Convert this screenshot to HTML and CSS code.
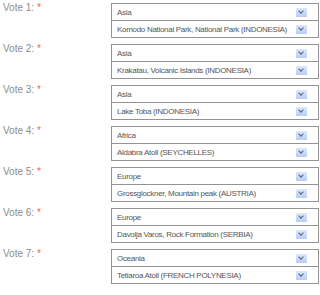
FILE: index.html
```html
<!DOCTYPE html>
<html lang="en">
<head>
    <meta charset="UTF-8">
    <title>Vote</title>
    <link rel="stylesheet" href="styles.css">
</head>
<body>
    <div class="votes">
        <div class="vote">
            <div class="label">Vote 1: <span class="req">*</span></div>
            <div class="picks">
                <div class="pick"><span>Asia</span><i class="arrow"></i></div>
                <div class="pick"><span>Komodo National Park, National Park (INDONESIA)</span><i class="arrow"></i></div>
            </div>
        </div>
        <div class="vote">
            <div class="label">Vote 2: <span class="req">*</span></div>
            <div class="picks">
                <div class="pick"><span>Asia</span><i class="arrow"></i></div>
                <div class="pick"><span>Krakatau, Volcanic Islands (INDONESIA)</span><i class="arrow"></i></div>
            </div>
        </div>
        <div class="vote">
            <div class="label">Vote 3: <span class="req">*</span></div>
            <div class="picks">
                <div class="pick"><span>Asia</span><i class="arrow"></i></div>
                <div class="pick"><span>Lake Toba (INDONESIA)</span><i class="arrow"></i></div>
            </div>
        </div>
        <div class="vote">
            <div class="label">Vote 4: <span class="req">*</span></div>
            <div class="picks">
                <div class="pick"><span>Africa</span><i class="arrow"></i></div>
                <div class="pick"><span>Aldabra Atoll (SEYCHELLES)</span><i class="arrow"></i></div>
            </div>
        </div>
        <div class="vote">
            <div class="label">Vote 5: <span class="req">*</span></div>
            <div class="picks">
                <div class="pick"><span>Europe</span><i class="arrow"></i></div>
                <div class="pick"><span>Grossglockner, Mountain peak (AUSTRIA)</span><i class="arrow"></i></div>
            </div>
        </div>
        <div class="vote">
            <div class="label">Vote 6: <span class="req">*</span></div>
            <div class="picks">
                <div class="pick"><span>Europe</span><i class="arrow"></i></div>
                <div class="pick"><span>Davolja Varos, Rock Formation (SERBIA)</span><i class="arrow"></i></div>
            </div>
        </div>
        <div class="vote">
            <div class="label">Vote 7: <span class="req">*</span></div>
            <div class="picks">
                <div class="pick"><span>Oceania</span><i class="arrow"></i></div>
                <div class="pick"><span>Tetiaroa Atoll (FRENCH POLYNESIA)</span><i class="arrow"></i></div>
            </div>
        </div>
    </div>
</body>
</html>
```

FILE: styles.css
```css
body {
    margin: 0;
    padding: 3px 1px 0 3px;
    background: #fff;
    font-family: "Liberation Sans", Arial, sans-serif;
}
.vote {
    display: flex;
    margin-bottom: 6px;
}
.label {
    width: 108px;
    font-size: 10px;
    color: #8c8c8c;
    margin-top: -1px;
}
.req {
    color: #ec6a4a;
}
.picks {
    width: 208px;
    display: flex;
    flex-direction: column;
}
.pick {
    height: 16px;
    border: 1px solid #939393;
    background: #fff;
    display: flex;
    align-items: center;
    padding: 0 11px 0 5px;
    font-size: 8px;
    letter-spacing: -0.3px;
    color: #555;
}
.pick + .pick {
    margin-top: -1px;
}
.pick span {
    flex: 1;
    white-space: nowrap;
    overflow: hidden;
}
.arrow {
    width: 11px;
    height: 9px;
    background: linear-gradient(#dde7fb, #b8cdf5);
    position: relative;
}
.arrow::after {
    content: "";
    position: absolute;
    left: 3px;
    top: 1px;
    width: 3px;
    height: 3px;
    border-right: 1.5px solid #4d6185;
    border-bottom: 1.5px solid #4d6185;
    transform: rotate(45deg);
}
```
